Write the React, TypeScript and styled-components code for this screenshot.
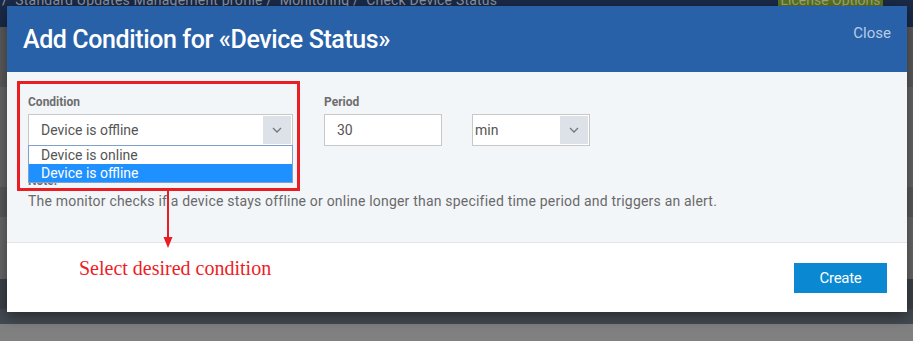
import * as React from "react";
import styled, { createGlobalStyle } from "styled-components";

const GlobalStyle = createGlobalStyle`
  html, body {
    margin: 0;
    padding: 0;
    background: #808080;
    font-family: Roboto, "Liberation Sans", Arial, sans-serif;
  }
`;

const Page = styled.div`
  position: relative;
  width: 913px;
  height: 341px;
  overflow: hidden;
`;

const Backdrop = styled.div`
  display: flex;
  flex-direction: column;
  width: 100%;
  height: 100%;
`;

const TopBar = styled.div`
  height: 27px;
  background: #1a2a48;
  display: flex;
  align-items: flex-start;
  justify-content: space-between;
  overflow: hidden;
`;

const Crumbs = styled.div`
  margin-top: -8px;
  padding-left: 2px;
  color: #8d95a3;
  font-size: 14px;
  letter-spacing: 0.2px;
  white-space: nowrap;
`;

const LicenseButton = styled.div`
  margin-top: -6px;
  margin-right: 30px;
  height: 14px;
  width: 105px;
  text-align: center;
  background: #5a7420;
  color: #a3a884;
  font-size: 14px;
  line-height: 12px;
  white-space: nowrap;
`;

type BandProps = { h: number; bg: string };
const Band = styled.div<BandProps>`
  height: ${(p) => p.h}px;
  background: ${(p) => p.bg};
  flex-shrink: 0;
`;

const Modal = styled.div`
  position: absolute;
  left: 7px;
  top: 6px;
  width: 900px;
  height: 306px;
  display: flex;
  flex-direction: column;
  background: #fff;
  box-shadow: 0 4px 14px rgba(0, 0, 0, 0.45);
`;

const Header = styled.div`
  height: 66px;
  background: #2861a8;
  display: flex;
  align-items: flex-start;
  justify-content: space-between;
  padding: 0 16px;
  box-sizing: border-box;
`;

const Title = styled.h2`
  margin: 0;
  margin-top: 19px;
  color: #fff;
  font-size: 25px;
  font-weight: 500;
  letter-spacing: -0.4px;
  line-height: 30px;
`;

const CloseLink = styled.span`
  margin-top: 18px;
  color: #b9cbe6;
  font-size: 15px;
`;

const Body = styled.div`
  flex: 1;
  background: #f3f6f9;
  padding: 23px 21px 0;
  box-sizing: border-box;
  border-bottom: 1px solid #e2e4e7;
`;

const FieldsRow = styled.div`
  display: flex;
  align-items: flex-end;
`;

type GroupProps = { w: number; ml?: number };
const FieldGroup = styled.div<GroupProps>`
  position: relative;
  width: ${(p) => p.w}px;
  margin-left: ${(p) => p.ml || 0}px;
  display: flex;
  flex-direction: column;
`;

const Label = styled.label`
  color: #6d6d6d;
  font-size: 12px;
  font-weight: 700;
  line-height: 14px;
  margin-bottom: 5px;
`;

const SelectBox = styled.div`
  height: 32px;
  box-sizing: border-box;
  border: 1px solid #c8c8c8;
  background: #fff;
  display: flex;
  align-items: stretch;
`;

type ValueProps = { pl?: number };
const SelectValue = styled.span<ValueProps>`
  flex: 1;
  display: flex;
  align-items: center;
  padding-left: ${(p) => (p.pl === undefined ? 12 : p.pl)}px;
  color: #555;
  font-size: 14px;
`;

const ArrowButton = styled.span`
  width: 28px;
  margin: 1px;
  background: #dde2e9;
  display: flex;
  align-items: center;
  justify-content: center;
`;

const TextInput = styled.div`
  height: 32px;
  box-sizing: border-box;
  border: 1px solid #c8c8c8;
  background: #fff;
  display: flex;
  align-items: center;
  padding-left: 12px;
  color: #555;
  font-size: 14px;
`;

const OptionList = styled.ul`
  position: absolute;
  left: 0;
  right: 0;
  top: 50px;
  margin: 0;
  padding: 0;
  list-style: none;
  background: #fff;
  border: 1px solid #7f9fd0;
  z-index: 2;
`;

type OptionProps = { active?: boolean };
const Option = styled.li<OptionProps>`
  height: 18px;
  line-height: 18px;
  padding-left: 12px;
  font-size: 14px;
  color: ${(p) => (p.active ? "#fff" : "#555")};
  background: ${(p) => (p.active ? "#1e90ff" : "transparent")};
`;

const NoteTitle = styled.div`
  margin-top: 28px;
  color: #6d6d6d;
  font-size: 12px;
  font-weight: 700;
  line-height: 14px;
`;

const NoteText = styled.p`
  margin: 5px 0 0;
  color: #6a6a6a;
  font-size: 14px;
  letter-spacing: 0.2px;
  line-height: 17px;
`;

const Footer = styled.div`
  height: 69px;
  display: flex;
  align-items: center;
  justify-content: flex-end;
  padding: 0 20px;
  box-sizing: border-box;
`;

const CreateButton = styled.button`
  width: 93px;
  height: 30px;
  border: none;
  background: #0a88d2;
  color: #fff;
  font-family: Roboto, sans-serif;
  font-size: 15px;
  letter-spacing: -0.3px;
  cursor: pointer;
`;

const HighlightBox = styled.div`
  position: absolute;
  left: 17px;
  top: 81px;
  width: 283px;
  height: 110px;
  box-sizing: border-box;
  border: 3px solid #ea1c24;
  z-index: 3;
  pointer-events: none;
`;

const Pointer = styled.svg`
  position: absolute;
  left: 162px;
  top: 190px;
  z-index: 3;
`;

const Callout = styled.span`
  position: absolute;
  left: 79px;
  top: 257px;
  color: #ee1c25;
  font-family: "Liberation Serif", "Times New Roman", serif;
  font-size: 20px;
  z-index: 3;
`;

const Chevron = () => (
  <svg width="10" height="6" viewBox="0 0 10 6">
    <path d="M1 1l4 4 4-4" fill="none" stroke="#6f7782" strokeWidth="1.3" />
  </svg>
);

const bands = [
  { h: 60, bg: "#5b5b5b" },
  { h: 100, bg: "#666666" },
  { h: 30, bg: "#5a5a5a" },
  { h: 62, bg: "#676767" },
  { h: 30, bg: "#3c4149" },
  { h: 15, bg: "#444a52" },
];

export default function App() {
  return (
    <Page>
      <GlobalStyle />
      <Backdrop>
        <TopBar>
          <Crumbs>
            /&nbsp; Standard Updates Management profile /&nbsp; Monitoring /&nbsp;
            Check Device Status
          </Crumbs>
          <LicenseButton>License Options</LicenseButton>
        </TopBar>
        {bands.map((b, i) => (
          <Band key={i} h={b.h} bg={b.bg} />
        ))}
      </Backdrop>

      <Modal>
        <Header>
          <Title>Add Condition for «Device Status»</Title>
          <CloseLink>Close</CloseLink>
        </Header>
        <Body>
          <FieldsRow>
            <FieldGroup w={265}>
              <Label>Condition</Label>
              <SelectBox>
                <SelectValue>Device is offline</SelectValue>
                <ArrowButton>
                  <Chevron />
                </ArrowButton>
              </SelectBox>
              <OptionList>
                <Option>Device is online</Option>
                <Option active>Device is offline</Option>
              </OptionList>
            </FieldGroup>
            <FieldGroup w={118} ml={31}>
              <Label>Period</Label>
              <TextInput>30</TextInput>
            </FieldGroup>
            <FieldGroup w={118} ml={30}>
              <SelectBox>
                <SelectValue pl={2}>min</SelectValue>
                <ArrowButton>
                  <Chevron />
                </ArrowButton>
              </SelectBox>
            </FieldGroup>
          </FieldsRow>
          <NoteTitle>Note:</NoteTitle>
          <NoteText>
            The monitor checks if a device stays offline or online longer than
            specified time period and triggers an alert.
          </NoteText>
        </Body>
        <Footer>
          <CreateButton>Create</CreateButton>
        </Footer>
      </Modal>

      <HighlightBox />
      <Pointer width="12" height="60" viewBox="0 0 12 60">
        <line x1="6" y1="0" x2="6" y2="48" stroke="#ea1c24" strokeWidth="2" />
        <path d="M1.5 47 L10.5 47 L6 58 Z" fill="#ea1c24" />
      </Pointer>
      <Callout>Select desired condition</Callout>
    </Page>
  );
}
